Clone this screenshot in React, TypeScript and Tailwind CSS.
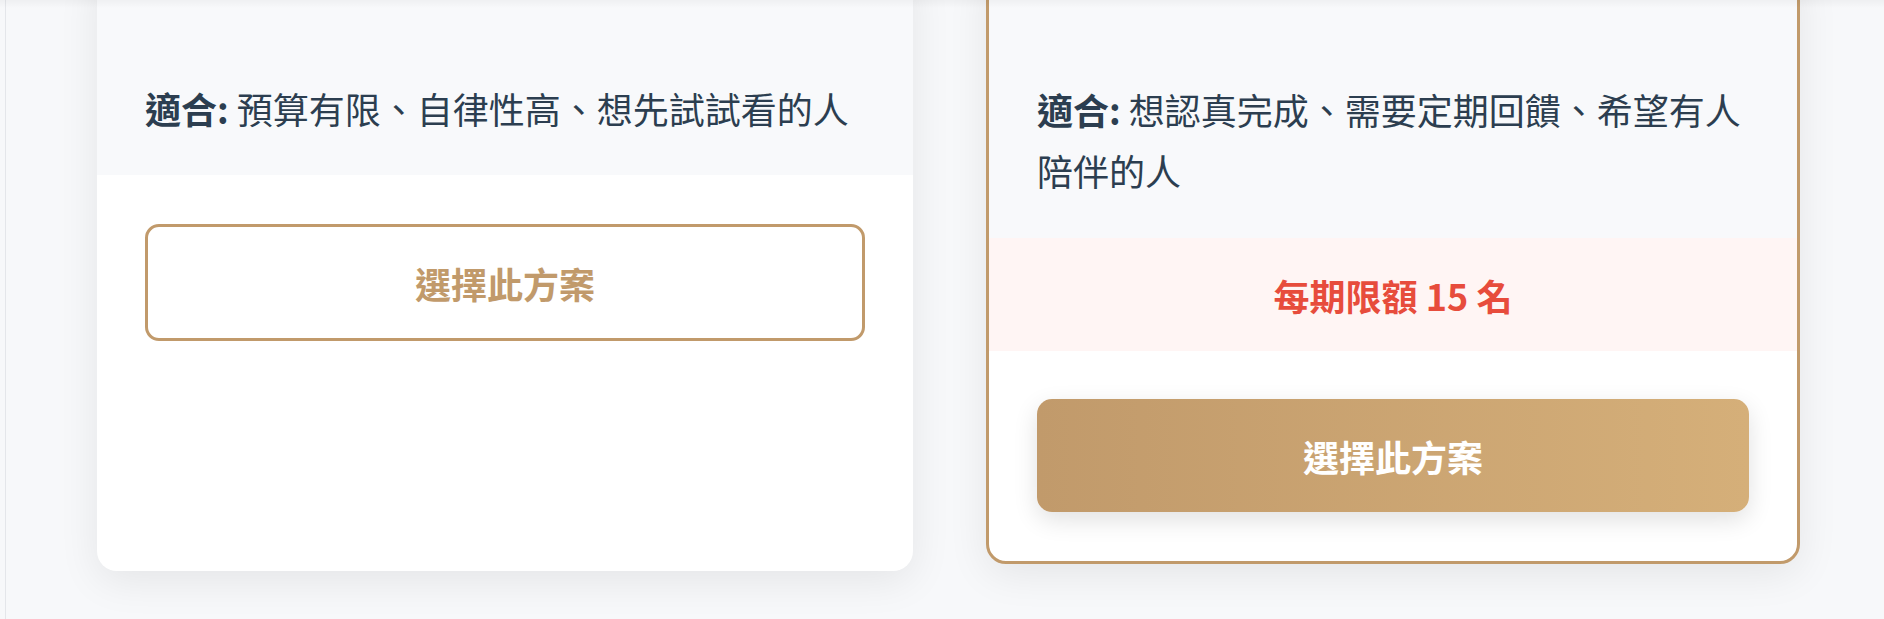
import React from "react";

export default function App() {
  return (
    <div className="relative flex w-full h-[619px] overflow-hidden bg-[#f7f8fa] font-['Noto_Sans_CJK_TC','Noto_Sans',sans-serif]">
      <div className="ml-[5px] flex-1 self-stretch border-l border-[#e4e6ea] pl-[91px]">
        <div className="flex items-start gap-[73px] -mt-[40px]">
          {/* Left card */}
          <div className="w-[816px] h-[611px] shrink-0 rounded-[20px] bg-white overflow-hidden shadow-[0_10px_40px_rgba(0,0,0,0.08)] flex flex-col">
            <div className="bg-[#f8f9fb] px-[48px] pt-[118px] pb-[36px] text-[36px] leading-[1.7] text-[#2c3e50]">
              <span className="font-bold">適合:</span> 預算有限、自律性高、想先試試看的人
            </div>
            <div className="px-[48px] pt-[49px]">
              <button className="w-full h-[117px] rounded-[14px] border-[3px] border-[#c19a6b] bg-white text-[36px] font-bold text-[#c19a6b] font-['Noto_Sans_CJK_TC','Noto_Sans',sans-serif]">
                選擇此方案
              </button>
            </div>
          </div>

          {/* Right card */}
          <div className="w-[814px] h-[604px] shrink-0 rounded-[20px] border-[3px] border-[#c19a6b] bg-white overflow-hidden shadow-[0_10px_40px_rgba(0,0,0,0.08)] flex flex-col">
            <div className="bg-[#f8f9fb] px-[48px] pt-[116px] pb-[37px] text-[36px] leading-[1.7] text-[#2c3e50]">
              <span className="font-bold">適合:</span> 想認真完成、需要定期回饋、希望有人陪伴的人
            </div>
            <div className="h-[113px] bg-[#fff5f4] flex items-center justify-center text-[36px] font-bold text-[#e74c3c]">
              每期限額 15 名
            </div>
            <div className="px-[48px] pt-[48px]">
              <button className="w-full h-[113px] rounded-[15px] bg-linear-to-r from-[#c19a6b] to-[#d5af79] text-[36px] font-bold text-white shadow-[0_8px_24px_rgba(0,0,0,0.12)] font-['Noto_Sans_CJK_TC','Noto_Sans',sans-serif]">
                選擇此方案
              </button>
            </div>
          </div>
        </div>
      </div>
      <div className="pointer-events-none absolute top-0 left-0 right-0 h-[8px] bg-linear-to-b from-[rgba(0,0,0,0.035)] to-transparent" />
    </div>
  );
}
